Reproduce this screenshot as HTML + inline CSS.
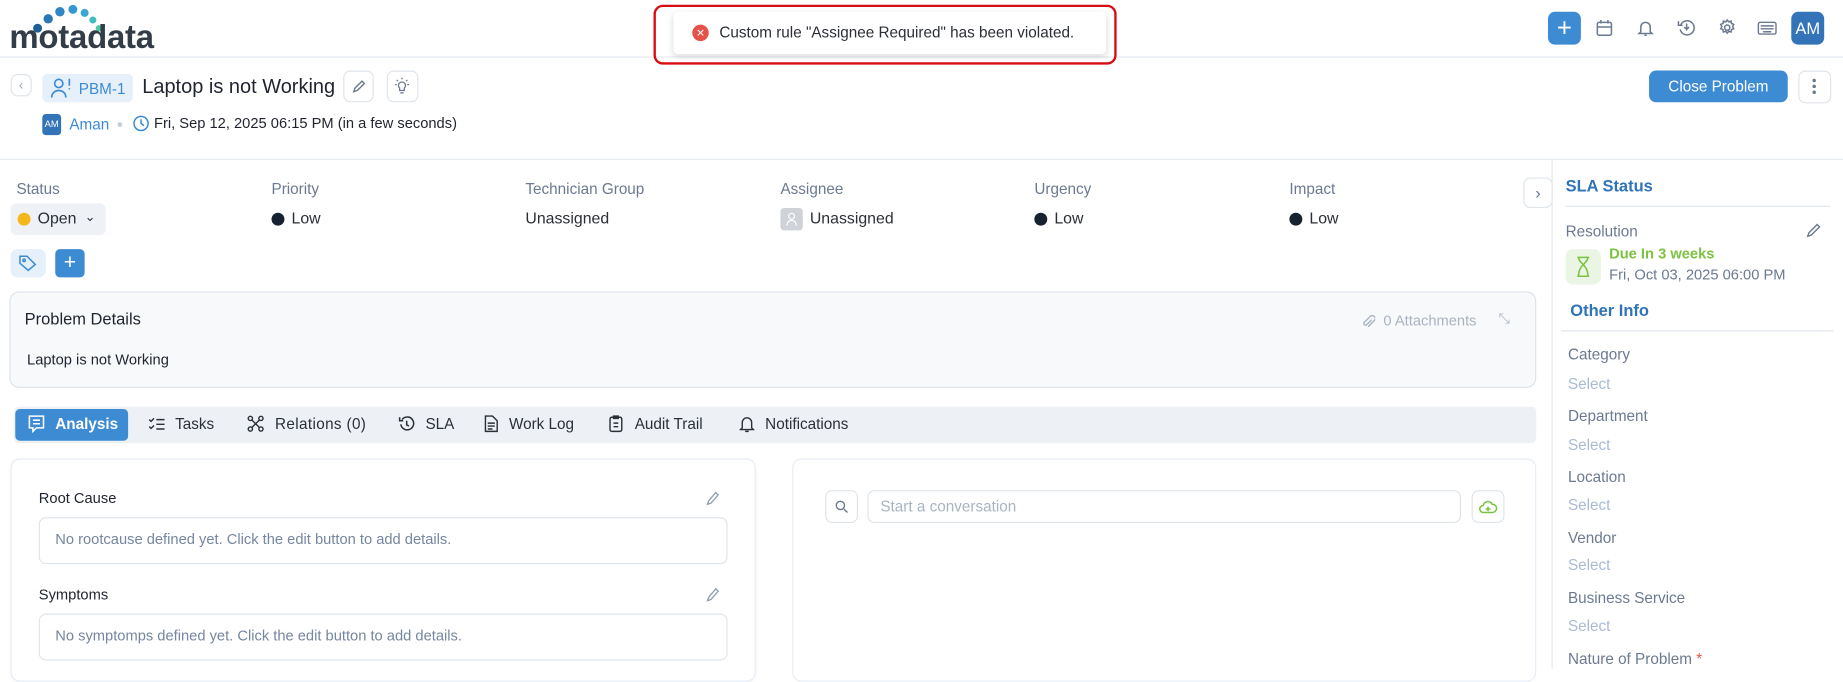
<!DOCTYPE html>
<html><head><meta charset="utf-8"><style>
*{box-sizing:border-box;margin:0;padding:0}
html,body{width:1843px;height:669px;overflow:hidden;background:#fff;font-family:"Liberation Sans",sans-serif;}
#w{position:absolute;left:0;top:0;width:1568px;height:569px;transform:scale(1.17538);transform-origin:0 0;}
.a{position:absolute}
.t{position:absolute;white-space:nowrap}
.lab{color:#6b7a90;font-size:13px}
.val{color:#2b2f36;font-size:13.5px}
.sel{color:#a9bbd2;font-size:13px}
.btnb{position:absolute;border:1px solid #dfe4ec;border-radius:6px;background:#fff}
svg{position:absolute}
</style></head><body><div id="w">
<!-- header -->
<div class="a" style="left:0;top:48px;width:1568px;height:1px;background:#e3e8ef"></div>
<svg style="left:26px;top:3px" width="64" height="26"><circle cx="6" cy="21" r="3.8" fill="#1f5f98"/><circle cx="15" cy="13" r="4" fill="#2a77b6"/><circle cx="25" cy="7" r="4" fill="#2f86c6"/><circle cx="36" cy="5" r="3.8" fill="#3795d0"/><circle cx="46" cy="8" r="3.4" fill="#3aa6d6"/><circle cx="53" cy="14" r="3" fill="#3fbec0"/><circle cx="58" cy="21" r="2.6" fill="#4cc9a8"/></svg>
<div class="t" style="left:8px;top:16px;font-size:28px;font-weight:bold;color:#333d48;letter-spacing:-0.2px">motadata</div>
<!-- toast -->
<div class="a" style="left:556px;top:4px;width:394px;height:51px;border:2px solid #d80d12;border-radius:8px"></div>
<div class="a" style="left:573px;top:10px;width:368px;height:36px;background:#fff;border-radius:4px;box-shadow:0 2px 6px rgba(0,0,0,.15)"></div>
<div class="a" style="left:589px;top:21px;width:14px;height:14px;border-radius:50%;background:#e5524a;color:#fff;font-size:9px;text-align:center;line-height:14px">✕</div>
<div class="t" style="left:612px;top:20px;font-size:13px;color:#2b2f36">Custom rule "Assignee Required" has been violated.</div>
<!-- top right -->
<div class="a" style="left:1317px;top:10px;width:28px;height:28px;background:#3d8bd3;border-radius:6px;color:#fff;font-size:22px;text-align:center;line-height:27px">+</div>
<svg style="left:1358px;top:17px" width="14" height="14" fill="none" stroke="#6b7a90" stroke-width="1.3"><rect x="1" y="2" width="12" height="11" rx="1.5"/><path d="M1 6h12M4 0v3M10 0v3"/></svg>
<svg style="left:1393px;top:16px" width="14" height="16" fill="none" stroke="#6b7a90" stroke-width="1.3"><path d="M3 11V7a4 4 0 018 0v4l1.5 1.5h-11z M6 14h2"/></svg>
<svg style="left:1427px;top:16px" width="16" height="16" fill="none" stroke="#6b7a90" stroke-width="1.3"><path d="M3 5a6 6 0 11-.5 4M1 2v3.5h3.5M8 4v5l2-2M8 9L6 7"/></svg>
<svg style="left:1462px;top:16px" width="15" height="15" fill="none" stroke="#6b7a90" stroke-width="1.3"><circle cx="7.5" cy="7.5" r="2.2"/><path d="M7.5 1l1.3 1.6 2-.6.3 2 1.9.8-.9 1.8.9 1.8-1.9.8-.3 2-2-.6-1.3 1.6-1.3-1.6-2 .6-.3-2-1.9-.8.9-1.8-.9-1.8 1.9-.8.3-2 2 .6z"/></svg>
<svg style="left:1495px;top:18px" width="17" height="12" fill="none" stroke="#6b7a90" stroke-width="1.2"><rect x="1" y="1" width="15" height="10" rx="1.5"/><path d="M3 4h11M3 6.5h11M5 9h7"/></svg>
<div class="a" style="left:1524px;top:10px;width:28px;height:28px;background:#3373b8;border-radius:6px;color:#fff;font-size:14px;text-align:center;line-height:28px">AM</div>
<!-- row2 -->
<div class="btnb" style="left:9px;top:63px;width:18px;height:19px;color:#9aa7b8;font-size:12px;text-align:center;line-height:17px">‹</div>
<div class="a" style="left:36px;top:63px;width:77px;height:24px;background:#e6f0fa;border-radius:4px"></div>
<svg style="left:43px;top:66px" width="20" height="18" fill="none" stroke="#3d8bd3" stroke-width="1.4"><circle cx="7" cy="5" r="3.5"/><path d="M1 17c0-4 3-6 6-6s6 2 6 6M16 1v6M16 9v1"/></svg>
<div class="t" style="left:67px;top:68px;font-size:13px;color:#3d8bd3">PBM-1</div>
<div class="t" style="left:121px;top:64px;font-size:17px;color:#1f2430">Laptop is not Working</div>
<div class="btnb" style="left:292px;top:60px;width:26px;height:27px"></div>
<svg style="left:299px;top:67px" width="13" height="13" fill="none" stroke="#6b7a90" stroke-width="1.2"><path d="M2 11l1-3 6-6 2 2-6 6z"/></svg>
<div class="btnb" style="left:329px;top:60px;width:27px;height:27px"></div>
<svg style="left:335px;top:66px" width="14" height="14" fill="none" stroke="#6b7a90" stroke-width="1.1"><path d="M5 9a3 3 0 114 0v2H5zM5.5 13h3M7 0v1.5M1 6h1.5M11.5 6H13M2.5 2l1 1M11.5 2l-1 1"/></svg>
<div class="a" style="left:1403px;top:60px;width:118px;height:27px;background:#3d8bd3;border-radius:6px;color:#fff;font-size:13px;text-align:center;line-height:27px">Close Problem</div>
<div class="btnb" style="left:1530px;top:60px;width:28px;height:28px"></div>
<div class="a" style="left:1542px;top:67px;width:3px;height:3px;border-radius:50%;background:#6b7a90;box-shadow:0 5px 0 #6b7a90,0 10px 0 #6b7a90"></div>
<!-- row3 -->
<div class="a" style="left:36px;top:97px;width:16px;height:18px;background:#3373b8;border-radius:3px;color:#fff;font-size:8px;text-align:center;line-height:18px">AM</div>
<div class="t" style="left:59px;top:98px;font-size:13px;color:#3d8bd3">Aman</div>
<div class="a" style="left:100px;top:104px;width:4px;height:4px;border-radius:50%;background:#c5ccd6"></div>
<svg style="left:113px;top:98px" width="14" height="14" fill="none" stroke="#3d8bd3" stroke-width="1.3"><circle cx="7" cy="7" r="6"/><path d="M7 3.5V7l2.5 2"/></svg>
<div class="t" style="left:131px;top:98px;font-size:12.5px;color:#1f2430">Fri, Sep 12, 2025 06:15 PM (in a few seconds)</div>
<div class="a" style="left:0;top:135px;width:1568px;height:1px;background:#e3e8ef"></div>
<!-- fields -->
<div class="t lab" style="left:14px;top:153px">Status</div>
<div class="t lab" style="left:231px;top:153px">Priority</div>
<div class="t lab" style="left:447px;top:153px">Technician Group</div>
<div class="t lab" style="left:664px;top:153px">Assignee</div>
<div class="t lab" style="left:880px;top:153px">Urgency</div>
<div class="t lab" style="left:1097px;top:153px">Impact</div>
<div class="a" style="left:9px;top:173px;width:81px;height:27px;background:#eef1f5;border-radius:5px"></div>
<div class="a" style="left:15px;top:181px;width:11px;height:11px;border-radius:50%;background:#f4b81c"></div>
<div class="t val" style="left:32px;top:178px">Open</div>
<div class="t" style="left:72px;top:178px;font-size:11px;color:#2b2f36">⌄</div>
<div class="a" style="left:231px;top:181px;width:11px;height:11px;border-radius:50%;background:#172230"></div>
<div class="t val" style="left:248px;top:178px">Low</div>
<div class="t val" style="left:447px;top:178px">Unassigned</div>
<div class="a" style="left:664px;top:177px;width:19px;height:19px;border-radius:3px;background:#cfd2d6"></div>
<svg style="left:668px;top:180px" width="11" height="13" fill="none" stroke="#fff" stroke-width="1"><circle cx="5.5" cy="4" r="2.5"/><path d="M1.5 12c0-3 2-4.5 4-4.5s4 1.5 4 4.5"/></svg>
<div class="t val" style="left:689px;top:178px">Unassigned</div>
<div class="a" style="left:880px;top:181px;width:11px;height:11px;border-radius:50%;background:#172230"></div>
<div class="t val" style="left:897px;top:178px">Low</div>
<div class="a" style="left:1097px;top:181px;width:11px;height:11px;border-radius:50%;background:#172230"></div>
<div class="t val" style="left:1114px;top:178px">Low</div>
<div class="btnb" style="left:1296px;top:151px;width:25px;height:26px;color:#6b7a90;font-size:14px;text-align:center;line-height:24px">›</div>
<div class="a" style="left:9px;top:212px;width:30px;height:24px;background:#e6f0fa;border-radius:6px"></div>
<svg style="left:16px;top:217px" width="15" height="14" fill="none" stroke="#3d8bd3" stroke-width="1.3"><path d="M1 1h6l7 7-6 5-7-6z"/><circle cx="4.5" cy="4.5" r="1"/></svg>
<div class="a" style="left:47px;top:212px;width:25px;height:24px;background:#3d8bd3;border-radius:4px;color:#fff;font-size:18px;text-align:center;line-height:23px">+</div>
<!-- problem details -->
<div class="a" style="left:8px;top:248px;width:1299px;height:82px;background:#f8f9fb;border:1px solid #dde3ea;border-radius:8px"></div>
<div class="t" style="left:21px;top:263px;font-size:14px;color:#1f2430">Problem Details</div>
<svg style="left:1158px;top:267px" width="12" height="13" fill="none" stroke="#a9b4c2" stroke-width="1.2"><path d="M9 5L4.5 9.5a1.5 1.5 0 01-2-2L8 2a2.5 2.5 0 013.5 3.5L6 11"/></svg>
<div class="t" style="left:1177px;top:266px;font-size:12.5px;color:#a9b4c2">0 Attachments</div>
<div class="t" style="left:1275px;top:264px;font-size:12px;color:#a9b4c2">⤡</div>
<div class="t" style="left:23px;top:299px;font-size:12.5px;color:#1f2430">Laptop is not Working</div>
<!-- tabs -->
<div class="a" style="left:12px;top:346px;width:1295px;height:31px;background:#edf1f6;border-radius:4px"></div>
<div class="a" style="left:13px;top:348px;width:96px;height:27px;background:#3d8bd3;border-radius:4px"></div>
<svg style="left:24px;top:353px" width="14" height="16" fill="none" stroke="#fff" stroke-width="1.3"><path d="M1 1h12v10H7l-3 3v-3H1z M4 4.5h6M4 7.5h6"/></svg>
<div class="t" style="left:47px;top:353px;font-size:13px;color:#fff;font-weight:bold">Analysis</div>
<svg style="left:126px;top:355px" width="15" height="12" fill="none" stroke="#2b2f36" stroke-width="1.2"><path d="M1 2l1.5 1.5L5 1M1 8l1.5 1.5L5 7M7 2h7M7 6h7M7 10h7"/></svg>
<div class="t" style="left:149px;top:353px;font-size:13px;color:#2b2f36">Tasks</div>
<svg style="left:210px;top:353px" width="15" height="15" fill="none" stroke="#2b2f36" stroke-width="1.2"><circle cx="3" cy="3" r="1.8"/><circle cx="12" cy="3" r="1.8"/><circle cx="3" cy="12" r="1.8"/><circle cx="12" cy="12" r="1.8"/><path d="M4.3 4.3l6.4 6.4M10.7 4.3l-6.4 6.4"/></svg>
<div class="t" style="left:234px;top:353px;font-size:13px;color:#2b2f36;letter-spacing:.3px">Relations (0)</div>
<svg style="left:339px;top:354px" width="14" height="14" fill="none" stroke="#2b2f36" stroke-width="1.3"><path d="M3 3a5.5 5.5 0 11-1 4M1 1v3h3M7 4v3.5l2 1"/></svg>
<div class="t" style="left:362px;top:353px;font-size:13px;color:#2b2f36">SLA</div>
<svg style="left:412px;top:353px" width="12" height="15" fill="none" stroke="#2b2f36" stroke-width="1.2"><path d="M1 1h6l4 4v9H1zM3 7h6M3 9.5h6M3 12h4"/></svg>
<div class="t" style="left:433px;top:353px;font-size:13px;color:#2b2f36">Work Log</div>
<svg style="left:518px;top:353px" width="12" height="15" fill="none" stroke="#2b2f36" stroke-width="1.2"><rect x="1" y="2" width="10" height="12" rx="1.5"/><path d="M4 1h4v2H4zM4 7h4M4 10h4"/></svg>
<div class="t" style="left:540px;top:353px;font-size:13px;color:#2b2f36">Audit Trail</div>
<svg style="left:629px;top:353px" width="13" height="15" fill="none" stroke="#2b2f36" stroke-width="1.2"><path d="M2.5 11V6.5a4 4 0 018 0V11l1.5 1.5H1z M5 14h3"/></svg>
<div class="t" style="left:651px;top:353px;font-size:13px;color:#2b2f36">Notifications</div>
<!-- left card -->
<div class="a" style="left:9px;top:390px;width:634px;height:190px;border:1px solid #e6edf5;border-radius:8px;box-shadow:0 1px 4px rgba(0,0,0,.05)"></div>
<div class="t" style="left:33px;top:417px;font-size:12.5px;color:#1f2430">Root Cause</div>
<svg style="left:600px;top:417px" width="13" height="14" fill="none" stroke="#93a2b6" stroke-width="1.2"><path d="M2 12l1-3 6-7 2 2-6 7z"/></svg>
<div class="a" style="left:33px;top:440px;width:586px;height:40px;border:1px solid #dfe5ee;border-radius:6px"></div>
<div class="t" style="left:47px;top:452px;font-size:12.5px;color:#7586a0">No rootcause defined yet. Click the edit button to add details.</div>
<div class="t" style="left:33px;top:499px;font-size:12.5px;color:#1f2430">Symptoms</div>
<svg style="left:600px;top:499px" width="13" height="14" fill="none" stroke="#93a2b6" stroke-width="1.2"><path d="M2 12l1-3 6-7 2 2-6 7z"/></svg>
<div class="a" style="left:33px;top:522px;width:586px;height:40px;border:1px solid #dfe5ee;border-radius:6px"></div>
<div class="t" style="left:47px;top:534px;font-size:12.5px;color:#7586a0">No symptomps defined yet. Click the edit button to add details.</div>
<!-- right card -->
<div class="a" style="left:674px;top:390px;width:633px;height:190px;border:1px solid #e6edf5;border-radius:8px"></div>
<div class="btnb" style="left:702px;top:417px;width:28px;height:28px"></div>
<svg style="left:710px;top:425px" width="12" height="12" fill="none" stroke="#6b7a90" stroke-width="1.2"><circle cx="5" cy="5" r="3.5"/><path d="M8 8l3 3"/></svg>
<div class="btnb" style="left:738px;top:417px;width:505px;height:28px"></div>
<div class="t" style="left:749px;top:423px;font-size:13px;color:#a9b4c2">Start a conversation</div>
<div class="btnb" style="left:1252px;top:417px;width:28px;height:28px"></div>
<svg style="left:1258px;top:424px" width="16" height="14" fill="none" stroke="#7cc242" stroke-width="1.3"><path d="M4 12a3 3 0 010-6 4 4 0 017.5-1A3 3 0 0112 12zM8 7v4M6 9h4"/></svg>
<!-- right panel -->
<div class="a" style="left:1320px;top:136px;width:1px;height:433px;background:#e3e8ef"></div>
<div class="t" style="left:1332px;top:150px;font-size:14px;color:#2f73b8;font-weight:bold">SLA Status</div>
<div class="a" style="left:1332px;top:175px;width:225px;height:1px;background:#dfe5ee"></div>
<div class="t lab" style="left:1332px;top:189px">Resolution</div>
<svg style="left:1536px;top:189px" width="14" height="14" fill="none" stroke="#6b7a90" stroke-width="1.2"><path d="M2 12l1-3 7-7 2 2-7 7z"/></svg>
<div class="a" style="left:1332px;top:212px;width:30px;height:30px;background:#eaf5e3;border-radius:6px"></div>
<svg style="left:1341px;top:218px" width="12" height="18" fill="none" stroke="#7cc242" stroke-width="1.3"><path d="M1 1h10M1 17h10M2 1c0 5 8 6 8 16M10 1c0 5-8 6-8 16"/></svg>
<div class="t" style="left:1369px;top:209px;font-size:12.5px;color:#7cc242;font-weight:bold">Due In 3 weeks</div>
<div class="t" style="left:1369px;top:227px;font-size:12.5px;color:#6b7a90">Fri, Oct 03, 2025 06:00 PM</div>
<div class="t" style="left:1336px;top:256px;font-size:14px;color:#2f73b8;font-weight:bold">Other Info</div>
<div class="a" style="left:1328px;top:281px;width:232px;height:1px;background:#dfe5ee"></div>
<div class="t lab" style="left:1334px;top:294px">Category</div>
<div class="t sel" style="left:1334px;top:319px">Select</div>
<div class="t lab" style="left:1334px;top:346px">Department</div>
<div class="t sel" style="left:1334px;top:371px">Select</div>
<div class="t lab" style="left:1334px;top:398px">Location</div>
<div class="t sel" style="left:1334px;top:422px">Select</div>
<div class="t lab" style="left:1334px;top:450px">Vendor</div>
<div class="t sel" style="left:1334px;top:473px">Select</div>
<div class="t lab" style="left:1334px;top:501px">Business Service</div>
<div class="t sel" style="left:1334px;top:525px">Select</div>
<div class="t lab" style="left:1334px;top:553px">Nature of Problem <span style="color:#e5524a">*</span></div>
</div></body></html>
